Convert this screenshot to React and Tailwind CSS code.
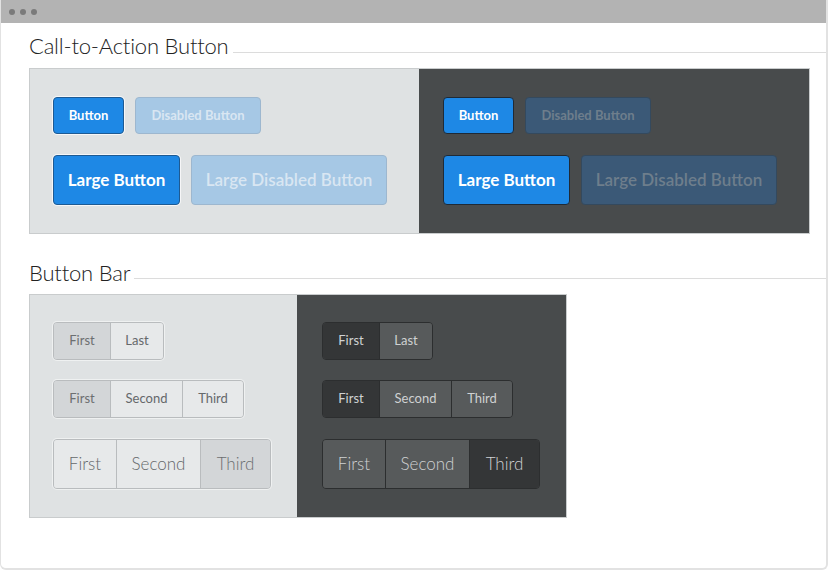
import React from "react";

const font = { fontFamily: '"Source Sans Pro", Lato, "Noto Sans", sans-serif' };

function Heading({ children, lineGap }) {
  return (
    <div className="flex items-end">
      <div className="text-[22px] leading-[26px] font-light text-[#222] pr-[4px] whitespace-nowrap tracking-[-0.2px]">{children}</div>
      <div className={"flex-1 border-b border-[#dcdcdc] " + lineGap}></div>
    </div>
  );
}

function CtaSide({ dark }) {
  const primary = dark
    ? "bg-[#1e88e5] border-[#1f2a36] text-white"
    : "bg-[#1e88e5] border-[#1d5a93] text-white shadow-[0_0_0_1px_rgba(255,255,255,0.7)]";
  const disabled = dark
    ? "bg-[#3b5977] border-[#34495d] text-[#6e7e8c]"
    : "bg-[#a6c8e5] border-[#9db7cf] text-[#d9e6f2]";
  return (
    <div className={"flex flex-col gap-[21px] pt-[28px] pb-[28px] " + (dark ? "w-[390px] pl-[24px] bg-[#484b4c]" : "w-[389px] pl-[23px] bg-[#dfe2e3]")}>
      <div className="flex gap-[11px]">
        <div className={"w-[71px] h-[37px] rounded-[4px] border flex items-center justify-center text-[13px] font-bold " + primary}>Button</div>
        <div className={"w-[126px] h-[37px] rounded-[4px] border flex items-center justify-center text-[13px] font-bold " + disabled}>Disabled Button</div>
      </div>
      <div className="flex gap-[11px]">
        <div className={"w-[127px] h-[50px] rounded-[4px] border flex items-center justify-center text-[17px] font-bold " + primary}>Large Button</div>
        <div className={"w-[196px] h-[50px] rounded-[4px] border flex items-center justify-center text-[17px] font-semibold " + disabled}>Large Disabled Button</div>
      </div>
    </div>
  );
}

function Bar({ items, large, dark }) {
  const wrap = dark ? "border-[#2c2e2f]" : "border-[#b9bcbe] shadow-[0_0_0_1px_rgba(255,255,255,0.5)]";
  const div = dark ? "border-[#2c2e2f]" : "border-[#b9bcbe]";
  return (
    <div className={"flex self-start rounded-[4px] border overflow-hidden " + wrap}>
      {items.map((it, i) => {
        let bg;
        if (dark) bg = it.sel ? "bg-[#343637] text-[#d0d2d3]" : "bg-[#575a5b] text-[#cfd1d2]";
        else bg = it.sel ? "bg-[#d3d6d8] text-[#6c6f71]" : "bg-[#e7e9ea] text-[#65686a]";
        return (
          <div
            key={i}
            style={{ width: it.w }}
            className={
              "flex items-center justify-center " +
              (large ? "h-[48px] text-[17px] font-light " : "h-[36px] text-[13px] ") +
              (i > 0 ? "border-l " + div + " " : "") +
              bg
            }
          >
            {it.t}
          </div>
        );
      })}
    </div>
  );
}

function BarSide({ dark }) {
  return (
    <div className={"flex flex-col gap-[20px] pt-[27px] pb-[28px] " + (dark ? "w-[269px] pl-[25px] bg-[#484b4c]" : "w-[267px] pl-[23px] bg-[#dfe2e3]")}>
      <Bar dark={dark} items={[{ t: "First", w: 56, sel: true }, { t: "Last", w: 53 }]} />
      <Bar dark={dark} items={[{ t: "First", w: 56, sel: true }, { t: "Second", w: 72 }, { t: "Third", w: 61 }]} />
      <div className="mt-[1px] flex">
        <Bar dark={dark} large items={[{ t: "First", w: 62 }, { t: "Second", w: 84 }, { t: "Third", w: 70, sel: true }]} />
      </div>
    </div>
  );
}

export default function App() {
  return (
    <div className="w-[828px] h-[570px] bg-white" style={font}>
      <div className="h-full flex flex-col border-l border-r-2 border-b-2 border-[#e2e2e2] rounded-b-[6px] overflow-hidden">
        <div className="h-[23px] shrink-0 bg-[#b3b3b3] flex items-center gap-[5px] pl-[8px]">
          <div className="w-[6px] h-[6px] rounded-full bg-[#7a7a7a]"></div>
          <div className="w-[6px] h-[6px] rounded-full bg-[#7a7a7a]"></div>
          <div className="w-[6px] h-[6px] rounded-full bg-[#7a7a7a]"></div>
        </div>
        <div className="pl-[28px] pt-[10px]">
          <Heading lineGap="mb-[6px]">Call-to-Action Button</Heading>
          <div className="mt-[9px] flex self-start w-[781px] border border-[#c9cccd]">
            <CtaSide />
            <CtaSide dark />
          </div>
          <div className="mt-[26px]">
            <Heading lineGap="mb-[7px]">Button Bar</Heading>
          </div>
          <div className="mt-[8px] flex w-[538px] border border-[#c9cccd]">
            <BarSide />
            <BarSide dark />
          </div>
        </div>
      </div>
    </div>
  );
}
